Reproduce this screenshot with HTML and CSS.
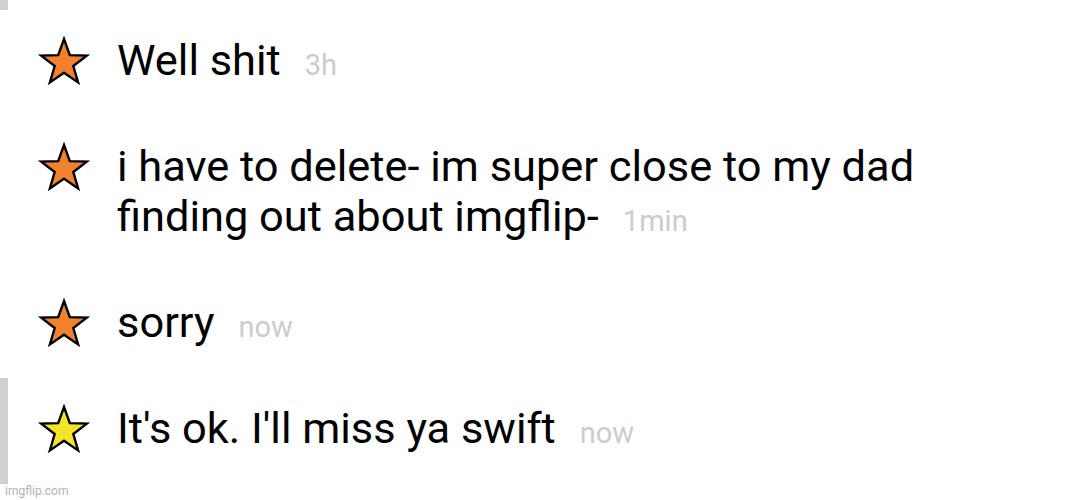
FILE: index.html
```html
<!DOCTYPE html>
<html>
<head>
<meta charset="utf-8">
<link rel="stylesheet" href="styles.css">
</head>
<body>
<div class="page">
  <div class="tail"></div>
  <ul class="list">
    <li class="item">
      <svg class="star" viewBox="0 0 48 46"><polygon class="orange" points="24,1 29.8,17.1 46.8,17.6 33.3,28 38.1,44.4 24,34.8 9.9,44.4 14.7,28 1.2,17.6 18.2,17.1"/></svg>
      <p class="msg">Well shit<span class="time">3h</span></p>
    </li>
    <li class="item">
      <svg class="star" viewBox="0 0 48 46"><polygon class="orange" points="24,1 29.8,17.1 46.8,17.6 33.3,28 38.1,44.4 24,34.8 9.9,44.4 14.7,28 1.2,17.6 18.2,17.1"/></svg>
      <p class="msg">i have to delete- im super close to my dad<br>finding out about imgflip-<span class="time">1min</span></p>
    </li>
    <li class="item">
      <svg class="star" viewBox="0 0 48 46"><polygon class="orange" points="24,1 29.8,17.1 46.8,17.6 33.3,28 38.1,44.4 24,34.8 9.9,44.4 14.7,28 1.2,17.6 18.2,17.1"/></svg>
      <p class="msg">sorry<span class="time">now</span></p>
    </li>
    <li class="item selected">
      <svg class="star" viewBox="0 0 48 46"><polygon class="yellow" points="24,1 29.8,17.1 46.8,17.6 33.3,28 38.1,44.4 24,34.8 9.9,44.4 14.7,28 1.2,17.6 18.2,17.1"/></svg>
      <p class="msg">It's ok. I'll miss ya swift<span class="time">now</span></p>
    </li>
  </ul>
  <div class="watermark">imgflip.com</div>
</div>
</body>
</html>
```
FILE: styles.css
```css
html, body {
  margin: 0;
  padding: 0;
  background: #ffffff;
}
.page {
  position: relative;
  width: 1080px;
  height: 500px;
  overflow: hidden;
  font-family: Roboto, "Liberation Sans", sans-serif;
}
.tail {
  height: 10px;
  width: 8px;
  background: #d0d0d0;
}
.list {
  list-style: none;
  margin: 0;
  padding: 0;
}
.item {
  display: flex;
  align-items: flex-start;
  padding: 26px 0 30px;
  border-left: 8px solid transparent;
}
.item.selected {
  border-left-color: #d0d0d0;
}
.star {
  width: 48px;
  height: 46px;
  margin-left: 32px;
  margin-top: 2px;
  overflow: visible;
  flex: none;
}
.star polygon {
  stroke: #000;
  stroke-width: 2.4;
  stroke-linejoin: miter;
}
.orange { fill: #f2812f; }
.yellow { fill: #f3e62a; }
.msg {
  margin: 0 0 0 29px;
  font-size: 43.4px;
  line-height: 50px;
  color: #000;
}
.time {
  margin-left: 24px;
  font-size: 29px;
  line-height: 1;
  color: #cccccc;
}
.watermark {
  position: absolute;
  left: 5px;
  bottom: 3px;
  font-size: 12px;
  line-height: 1;
  color: #b4b4b4;
}
```
